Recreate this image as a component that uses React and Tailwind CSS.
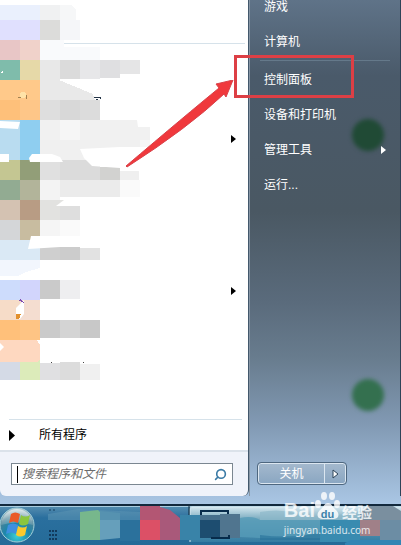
import { Search } from 'lucide-react';

const programs = [
  { id: 1, separator: true },
  { id: 2 },
  { id: 3 },
  { id: 4, submenu: true },
  { id: 5 },
  { id: 6 },
  { id: 7 },
  { id: 8, submenu: true },
  { id: 9 },
  { id: 10 },
];

// x, y, width, height, color
const tiles = [
  [0, 5, 40, 15, '#eaf0fd'], [40, 5, 20, 15, '#f0f1f2'],
  [0, 20, 40, 20, '#e0e0fe'], [40, 20, 20, 20, '#dcdcda'], [60, 20, 20, 20, '#f5f6f9'],
  [0, 40, 20, 20, '#e8c6c6'], [20, 40, 20, 20, '#f0d2ca'], [40, 40, 24, 20, '#f9fafc'], [64, 47, 36, 13, '#f9fafc'],
  [0, 60, 20, 20, '#7fbcab'], [20, 60, 20, 20, '#e6d9a8'], [40, 60, 20, 20, '#e8e8e8'], [60, 60, 20, 19, '#dbdbdb'],
  [80, 60, 20, 19, '#e7e7e9'], [100, 60, 20, 18, '#dfdfe1'], [120, 60, 20, 14, '#e5e5e6'],
  [0, 80, 40, 20, '#ffc98a'],
  [0, 100, 20, 20, '#fec07a'], [20, 100, 20, 20, '#fec688'], [40, 100, 20, 20, '#dedede'], [60, 100, 20, 20, '#d8d8d8'], [80, 100, 20, 20, '#dcdcdc'],
  [0, 120, 20, 40, '#b9dcf0'], [20, 120, 20, 40, '#8fcef0'], [40, 120, 98, 20, '#f1f1f1'], [60, 120, 20, 20, '#f6f6f6'], [138, 127, 12, 13, '#f1f1f1'],
  [40, 140, 100, 20, '#f0f0f0'], [140, 140, 10, 7, '#f6f6f6'],
  [0, 160, 20, 20, '#c4c692'], [20, 160, 20, 20, '#929e78'], [40, 160, 20, 20, '#e0e0e0'], [60, 160, 40, 20, '#dbdbdb'], [100, 167, 20, 13, '#d2d2d0'], [120, 171, 19, 9, '#efefef'],
  [0, 180, 20, 20, '#92ab92'], [20, 180, 20, 20, '#b2b49a'], [40, 180, 20, 20, '#f3f3f3'], [60, 180, 60, 17, '#ebebeb'], [120, 180, 20, 17, '#fafafa'],
  [0, 200, 20, 20, '#d4c2b2'], [20, 200, 20, 20, '#b89c84'], [40, 200, 24, 20, '#e2e2e0'], [60, 206, 20, 14, '#dedede'],
  [0, 220, 20, 20, '#d4d6d8'], [20, 220, 20, 20, '#c8bca0'], [40, 220, 20, 16, '#f5f5f5'], [60, 220, 20, 16, '#fafafa'],
  [0, 240, 40, 20, '#dae9f5'], [40, 247, 20, 13, '#cfcfcf'], [60, 247, 20, 13, '#cccccc'], [80, 248, 20, 12, '#e2e2e2'],
  [0, 280, 20, 20, '#cddcfc'], [20, 280, 20, 20, '#d2d5fc'], [40, 280, 20, 19, '#cacaca'], [60, 280, 20, 19, '#eeeef0'],
  [0, 300, 20, 20, '#f6dcc8'], [20, 300, 20, 20, '#f4ddd0'],
  [0, 320, 20, 20, '#ffc07a'], [20, 320, 20, 20, '#fec484'], [40, 320, 20, 18, '#cacaca'], [60, 320, 20, 18, '#d4d4d4'], [80, 320, 20, 18, '#c8c8c8'],
  [0, 360, 20, 20, '#d4dae6'], [20, 360, 20, 20, '#dcebba'], [40, 363, 20, 17, '#e0e0e2'], [60, 362, 20, 18, '#dcdcdc'], [80, 364, 20, 16, '#f0f0f0'],
];

function MosaicIcons() {
  return (
    <svg className="pointer-events-none absolute left-0 top-0" width="150" height="392" viewBox="0 0 150 392" shapeRendering="crispEdges" aria-hidden="true">
      {tiles.map(([x, y, w, h, fill]) => (
        <rect key={`${x}-${y}`} x={x} y={y} width={w} height={h} fill={fill} />
      ))}
      <path d="M60 5h12l4 5v10H60z" fill="#f6f7f8" />
      <path d="M40 80h19l34 14 2 6H40z" fill="#e9e9e9" />
      <path d="M0 260h40v8l-14 4-8 4H0z" fill="#f2f6fd" />
      <path d="M0 340h37l3 5v15l-3 2H0z" fill="#fed8c0" />
      <g shapeRendering="auto" fill="#fff">
        <path d="M0 121l20 1-2 7-18-1z" />
        <path d="M0 154h9v8H0z" />
        <path d="M30 162l-1-4 3-4h20l8 3 3 5z" />
        <path d="M80 149l40-2h30v26l-30-5-28-2-8-8z" />
        <path d="M31 236h29v11l-32 2z" />
        <path d="M0 343l4 4-4 4z" />
        <path d="M16 308l8-8v14l-4 5h-4z" />
        <path d="M120 79v-1l10-4h10v6z" />
        <path d="M137 120h13v6l-12 1z" />
        <path d="M56 206l8-6h20v6z" />
      </g>
      <path d="M16 314h5l-2 5h-3z" fill="#e2902e" />
      <path d="M18 300l3-1 3 4-2-1z" fill="#7c4bb0" />
      <path d="M18 97h6M26 95v4" stroke="#a08050" />
      <circle cx="23" cy="95" r="3" fill="#ffe3a8" />
      <path d="M94 97h6v2M96 99h2" stroke="#243447" fill="none" />
      <path d="M51 362h1M83 362h1" stroke="#444" />
      <path d="M0 73l3-2v2z" fill="#fff" />
    </svg>
  );
}

function Triangle({ className = 'h-[8px] w-[5px]' }) {
  return (
    <svg className={className} viewBox="0 0 5 8" preserveAspectRatio="none" aria-hidden="true">
      <path d="M0 0l5 4-5 4z" fill="currentColor" />
    </svg>
  );
}

function PlaceLink({ children, className = '' }) {
  return (
    <a href="#" className={`flex h-[35px] items-center justify-between px-[14px] ${className}`}>
      {children}
    </a>
  );
}

function PointerArrow() {
  return (
    <svg className="absolute right-full top-[22px] mr-[3px]" width="108" height="89" viewBox="0 0 108 89" aria-hidden="true">
      <path d="M107 0L90 4l3 4Q60 35 0 86l1 1Q62 48 98 14l2 3z" fill="#f0383c" stroke="#d8424a" strokeWidth="1" />
    </svg>
  );
}

function WindowsOrb() {
  return (
    <svg width="36" height="38" viewBox="0 0 36 38" aria-hidden="true">
      <defs>
        <radialGradient id="orb" cx="50%" cy="82%" r="80%">
          <stop offset="0" stopColor="#3ed0d6" />
          <stop offset="0.45" stopColor="#1d86ab" />
          <stop offset="0.75" stopColor="#4a8296" />
          <stop offset="1" stopColor="#a9c4cc" />
        </radialGradient>
        <linearGradient id="shine" x1="0" y1="0" x2="0" y2="1">
          <stop offset="0" stopColor="#fff" stopOpacity="0.65" />
          <stop offset="1" stopColor="#fff" stopOpacity="0.15" />
        </linearGradient>
      </defs>
      <circle cx="17" cy="19" r="17" fill="url(#orb)" stroke="#a5d0d8" />
      <path d="M1 19a16 16 0 0 1 32 0q-16-5-32 0z" fill="url(#shine)" />
      <path d="M11 8q4-3 9 0l-2 9q-5-3-9 0z" fill="#ea5a28" />
      <path d="M21 9q4 3 9 0l-2 9q-5 3-9 0z" fill="#8cc63e" />
      <path d="M8 19q5-3 10 0l-2 9q-5-3-10 0z" fill="#3f8fe0" />
      <path d="M18 20q5 3 9 0l-2 9q-5 3-9 0z" fill="#fdc92c" />
    </svg>
  );
}

function TaskbarTiles() {
  return (
    <svg className="pointer-events-none absolute left-0 top-0" width="401" height="39" viewBox="0 0 401 39" aria-hidden="true">
      <defs>
        <linearGradient id="task" x1="0" y1="0" x2="0" y2="1">
          <stop offset="0" stopColor="#d3e6ee" />
          <stop offset="0.4" stopColor="#6ea3b9" />
          <stop offset="1" stopColor="#347ca2" />
        </linearGradient>
      </defs>
      <path d="M0 0h401" stroke="#a9cde0" strokeWidth="2" />
      <path d="M48 8l30-5 62 3v8H48z" fill="#5a93b2" opacity="0.6" />
      <path d="M190 36V3q0-2 2-2h209v35z" fill="url(#task)" />
      <path d="M190 36V3q0-2 2-2h209" fill="none" stroke="#d8eaf2" />
      <path d="M189 0v10" stroke="#0c2434" />
      <path d="M49 4h2M53 4h2" stroke="#173e5c" />
      <path d="M49 25h8M49 29h8M49 33h8" stroke="#123a5c" strokeWidth="2" strokeDasharray="2 1" />
      <path d="M80 6l18-2 2 2v28H80z" fill="#77b78c" />
      <path d="M100 14h20v18l-20 2z" fill="#669fbb" />
      <path d="M100 5l20 2v7h-20z" fill="#5692b0" />
      <path d="M120 14h20v21h-20z" fill="#2b719c" />
      <path d="M140 1h20v33h-20z" fill="#dc5066" />
      <path d="M140 0h20v14h-20z" fill="#b35673" />
      <path d="M160 1l10 3 10 8v22h-20z" fill="#a9597a" />
      <path d="M180 9h21v25h-21z" fill="#3983a8" />
      <path d="M200 14h20v18h-20z" fill="#1d4d70" />
      <path d="M200 9h20v5h-20z" fill="#466f8c" />
      <path d="M220 8h20v24h-20z" fill="#50758f" />
      <path d="M201 9V5h27v3M211 32h18v-3" fill="none" stroke="#072b4b" strokeWidth="2" />
      <path d="M240 12q12-3 20 2h60v18h-60l-20-1z" fill="#559bb8" opacity="0.8" />
      <path d="M260 6q20-4 40 2t60-3v9H260z" fill="#8fb9ca" opacity="0.7" />
      <path d="M260 29q30 4 60-2v7H260z" fill="#26719a" opacity="0.6" />
      <path d="M320 14h40v22h-40z" fill="#398bb0" />
      <path d="M360 14h20v16h-20z" fill="#a08088" />
      <path d="M380 14h21v20h-21z" fill="#6c8da4" />
      <path d="M360 14V7l8-7h25l8 5v9z" fill="#7a8f9f" />
      <path d="M345 37l6-3h50v5h-56z" fill="#3285b4" />
    </svg>
  );
}

function Watermark() {
  return (
    <div className="pointer-events-none absolute bottom-[8px] right-[29px] flex flex-col text-white/80">
      <div className="flex h-[32px] items-end font-bold">
        <span className="font-['Liberation_Sans',sans-serif] text-[20px] leading-[25px]">Bai</span>
        <span className="relative flex h-[32px] w-[25px] items-end justify-center">
          <svg className="absolute left-0 top-0" width="25" height="30" viewBox="0 0 25 30" fill="currentColor" aria-hidden="true">
            <ellipse cx="3" cy="13" rx="3" ry="4" />
            <ellipse cx="9" cy="5" rx="3" ry="4" />
            <ellipse cx="17" cy="5" rx="3" ry="4" />
            <ellipse cx="22" cy="13" rx="3" ry="4" />
            <path d="M13 12c-4 0-4 4-8 7-4 4-3 9 2 9h12c5 0 6-5 2-9-4-3-4-7-8-7z" />
          </svg>
          <span className="relative font-['Liberation_Sans',sans-serif] text-[11px] leading-[18px] text-[#3d82aa]">du</span>
        </span>
        <span className="pl-[2px] font-['Noto_Sans_CJK_SC',sans-serif] text-[15px] leading-[22px]">经验</span>
      </div>
      <span className="font-['Noto_Sans',sans-serif] text-[10px] leading-[14px]">jingyan.baidu.com</span>
    </div>
  );
}

export default function App() {
  return (
    <div className="relative flex min-h-screen w-full flex-col overflow-hidden bg-[#a9c3df] font-['Liberation_Sans','Noto_Sans_CJK_SC',sans-serif] text-[12px]">
      {/* Start menu */}
      <main className="flex flex-1 bg-[linear-gradient(to_bottom,#5f7388_0%,#4a5a6a_15%,#4a5863_42%,#5a6b7c_60%,#687c8e_71%,#8199b3_84%,#a9c6e4_100%)] pb-[8px]">
        <section className="flex flex-1 flex-col overflow-hidden rounded-b-md border-r border-[#43586c] bg-[#f0f3fa]">
          <div className="relative flex flex-1 flex-col bg-white pt-[6px]">
            <MosaicIcons />
            <ul className="relative">
              {programs.map((program) => (
                <li key={program.id} className="h-[38px]">
                  <button type="button" aria-label={`Program ${program.id}`} className="flex h-full w-full items-center justify-end pr-[12px] text-black">
                    {program.separator && <span className="-mr-[9px] ml-[64px] h-px flex-1 self-end bg-[#d6e2ea]" />}
                    {program.submenu && <Triangle />}
                  </button>
                </li>
              ))}
            </ul>
            <div className="mt-auto pl-[9px] pr-[6px]">
              <hr className="border-[#d6e2ea]" />
              <button type="button" className="flex h-[30px] w-full items-center gap-[24px] text-black">
                <Triangle className="h-[11px] w-[6px]" />
                所有程序
              </button>
            </div>
          </div>
          <div className="border-t-2 border-[#dbe2ea] pb-[11px] pl-[11px] pr-[15px] pt-[11px]">
            <label className="flex h-[22px] items-center border border-[#7b8791] bg-white pl-[5px] pr-[5px]">
              <span className="h-[17px] w-px bg-black" />
              <input
                type="text"
                aria-label="搜索程序和文件"
                placeholder="搜索程序和文件"
                className="w-full min-w-0 flex-1 pl-[4px] italic outline-none placeholder:text-[#6b6b6b]"
              />
              <Search className="-scale-x-100 text-[#3a7aa5]" size={13} strokeWidth={3} />
            </label>
          </div>
        </section>

        <aside className="relative flex w-[152px] flex-col border-l border-r border-l-[#8796a5] border-r-[#2e4358] text-white">
          <span className="absolute right-[16px] top-[119px] size-[32px] rounded-full bg-[#204a35] blur-[2px]" />
          <span className="absolute right-[16px] top-[379px] size-[32px] rounded-full bg-[#34704f] blur-[2px]" />
          <nav className="relative">
            <PlaceLink className="-mt-[11px]">游戏</PlaceLink>
            <PlaceLink>计算机</PlaceLink>
            <hr className="mx-[10px] my-px border-[#65798a]" />
            <div className="relative">
              <PlaceLink>控制面板</PlaceLink>
              <div className="pointer-events-none absolute -left-[16px] -top-[7px] h-[43px] w-[120px] border-3 border-[#dd3f45]">
                <PointerArrow />
              </div>
            </div>
            <PlaceLink>设备和打印机</PlaceLink>
            <PlaceLink>
              管理工具
              <Triangle />
            </PlaceLink>
            <PlaceLink>运行...</PlaceLink>
          </nav>
          <div className="mb-[12px] ml-[8px] mt-auto flex h-[21px] w-[88px] rounded-[3px] border border-[#dbe6f0] bg-linear-to-b from-[#a3b8cd] to-[#8ba7c2] outline outline-[#4e677f]">
            <button type="button" className="flex-1 border-r border-[#dbe6f0] text-center">关机</button>
            <button type="button" aria-label="关机选项" className="flex w-[20px] items-center justify-center">
              <svg width="7" height="10" viewBox="0 0 7 10" aria-hidden="true">
                <path d="M1 1l5 4-5 4z" fill="#fff" stroke="#2d4459" />
              </svg>
            </button>
          </div>
        </aside>
      </main>

      {/* Taskbar */}
      <footer className="relative flex h-[41px] items-start border-t-2 border-[#12293d] bg-linear-to-b from-[#4f89ad] from-5% via-[#2a6f9e] via-30% to-[#256b98]">
        <TaskbarTiles />
        <button type="button" aria-label="开始" className="relative">
          <WindowsOrb />
        </button>
      </footer>

      <Watermark />
    </div>
  );
}
